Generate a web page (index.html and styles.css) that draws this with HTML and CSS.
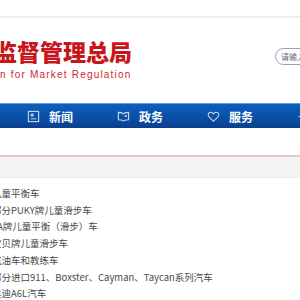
FILE: index.html
```html
<!DOCTYPE html>
<html lang="zh-CN">
<head>
    <meta charset="UTF-8">
    <meta name="viewport" content="width=device-width, initial-scale=1.0">
    <title>国家市场监督管理总局</title>
    <link rel="stylesheet" href="styles.css">
</head>
<body>
    <div class="page">
        <div class="topbar"></div>
        <header class="masthead">
            <div class="logo">
                <div class="logo-cn">监督管理总局</div>
                <div class="logo-en">n for Market Regulation</div>
            </div>
            <div class="search">请输入</div>
        </header>

        <nav class="mainnav">
            <a class="nav-item" href="#">
                <svg class="nav-icon" viewBox="0 0 14 14">
                    <rect x="1.5" y="1.5" width="11" height="11" fill="none" stroke="currentColor" stroke-width="1.2"/>
                    <rect x="4" y="4" width="3" height="3" fill="currentColor"/>
                    <path d="M4 9.5h6" stroke="currentColor" stroke-width="1"/>
                </svg>
                <span>新闻</span>
            </a>
            <a class="nav-item" href="#">
                <svg class="nav-icon" viewBox="0 0 14 14">
                    <path d="M1.5 2.5c2 0 4 .5 5.5 1.5 1.5-1 3.5-1.5 5.5-1.5v8c-2 0-4 .5-5.5 1.5-1.5-1-3.5-1.5-5.5-1.5z" fill="none" stroke="currentColor" stroke-width="1.2"/>
                    <rect x="8.5" y="5.5" width="2" height="2" fill="currentColor"/>
                </svg>
                <span>政务</span>
            </a>
            <a class="nav-item" href="#">
                <svg class="nav-icon" viewBox="0 0 14 14">
                    <path d="M7 12.2 2.2 7.4C.9 6.1 1 4 2.4 3c1.3-.9 3-.6 4 .6l.6.7.6-.7c1-1.2 2.7-1.5 4-.6 1.4 1 1.5 3.1.2 4.4z" fill="none" stroke="currentColor" stroke-width="1.1"/>
                </svg>
                <span>服务</span>
            </a>
            <a class="nav-item" href="#">
                <svg class="nav-icon" viewBox="0 0 14 14">
                    <path d="M1.5 7h11M7 1.5v11" stroke="currentColor" stroke-width="1.2"/>
                </svg>
                <span>互动</span>
            </a>
        </nav>

        <div class="gap"></div>
        <div class="band"></div>

        <ul class="news-list">
            <li>儿童平衡车</li>
            <li>部分PUKY牌儿童滑步车</li>
            <li>YA牌儿童平衡（滑步）车</li>
            <li>宝贝牌儿童滑步车</li>
            <li>汽油车和教练车</li>
            <li>部分进口911、Boxster、Cayman、Taycan系列汽车</li>
            <li>奥迪A6L汽车</li>
        </ul>
    </div>
</body>
</html>
```

FILE: styles.css
```css
body {
    margin: 0;
    background: #fff;
    font-family: "Noto Sans CJK SC", "Liberation Sans", sans-serif;
}
.page {
    width: 300px;
    height: 300px;
    overflow: hidden;
}
.topbar {
    height: 16px;
    border-bottom: 2px solid #ececec;
}
.masthead {
    height: 85px;
    display: flex;
    justify-content: space-between;
    align-items: flex-start;
    white-space: nowrap;
}
.logo {
    margin-left: -6px;
    padding-top: 18px;
}
.logo-cn {
    font-size: 23px;
    font-weight: 900;
    line-height: 30px;
    color: #c8161d;
}
.logo-en {
    margin-left: 6px;
    margin-top: 3px;
    font-family: "Liberation Sans", sans-serif;
    font-size: 10px;
    line-height: 12px;
    letter-spacing: 1.2px;
    color: #cc2a2f;
}
.search {
    margin-top: 30px;
    margin-right: -46px;
    width: 64px;
    height: 15px;
    padding-left: 5px;
    border: 1px solid #8aa4c2;
    border-radius: 9px;
    font-size: 8px;
    line-height: 15px;
    color: #666;
}
.mainnav {
    height: 24px;
    display: flex;
    padding-left: 27px;
    border-top: 1px solid #5b9be0;
    background: linear-gradient(#0d5fbd, #0a4ea6 60%, #093f8c);
    white-space: nowrap;
}
.nav-item {
    flex: 0 0 90px;
    display: flex;
    align-items: center;
    gap: 9px;
    color: #fff;
    text-decoration: none;
    font-size: 12px;
    font-weight: 700;
}
.nav-icon {
    width: 13px;
    height: 13px;
    color: #c9d8ec;
}
.gap {
    height: 27px;
}
.band {
    height: 20px;
    border-top: 2px solid #e4c8cd;
    border-bottom: 1px solid #ebebeb;
    background: #f4f4f4;
}
.news-list {
    list-style: none;
    margin: 0 0 0 -8px;
    padding: 7px 0 0;
    font-size: 9.5px;
    line-height: 16.7px;
    color: #4a4a4a;
    white-space: nowrap;
}
```
